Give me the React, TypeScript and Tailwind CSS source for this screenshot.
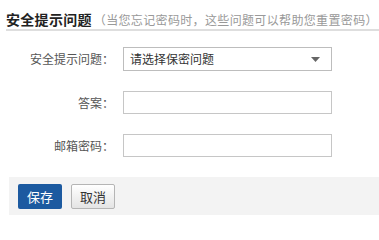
import React from "react";

const FONT = { fontFamily: '"Noto Sans CJK SC", "Noto Sans", sans-serif' };

function Row({ label, children }: { label: string; children: React.ReactNode }) {
  return (
    <div className="flex items-center">
      <label className="w-[115px] pr-[1px] text-right text-[12px] leading-none text-[#555]">{label}</label>
      <div className="ml-[8px]">{children}</div>
    </div>
  );
}

export default function App() {
  return (
    <div className="w-[379px] h-[220px] bg-white overflow-hidden" style={FONT}>
      <div className="pl-[6px] pt-[10px]">
        <div className="flex items-end h-[16px]">
          <span className="text-[14px] font-bold leading-none text-[#222] tracking-[0.3px]">安全提示问题</span>
          <span className="text-[12px] leading-none text-[#999] ml-[2px] tracking-[0.35px]">（当您忘记密码时，这些问题可以帮助您重置密码）</span>
        </div>
        <div className="mt-[3px] h-[2px] bg-[#dedede]" />
      </div>

      <div className="mt-[16px] flex flex-col gap-[20px]">
        <Row label="安全提示问题：">
          <div className="w-[209px] h-[24px] border border-[#bdbdbd] flex items-center justify-between px-[6px]">
            <span className="text-[12px] leading-none text-[#333]">请选择保密问题</span>
            <svg width="9" height="5" viewBox="0 0 9 5" className="mr-[5px]">
              <path d="M0 0 H9 L4.5 5 Z" fill="#666" />
            </svg>
          </div>
        </Row>
        <Row label="答案：">
          <div className="w-[209px] h-[23px] border border-[#c6c6c6]" />
        </Row>
        <Row label="邮箱密码：">
          <div className="w-[209px] h-[23px] border border-[#c6c6c6]" />
        </Row>
      </div>

      <div className="mt-[20px] ml-[9px] h-[38px] bg-[#f3f3f3] flex items-center pl-[9px] gap-[9px]">
        <button className="w-[44px] h-[25px] bg-[#1c5aa0] text-white text-[13px] leading-none rounded-[2px]">
          保存
        </button>
        <button className="w-[44px] h-[25px] border border-[#b5b5b5] bg-gradient-to-b from-white to-[#e4e4e4] text-[#333] text-[13px] leading-none rounded-[2px]">
          取消
        </button>
      </div>
    </div>
  );
}
